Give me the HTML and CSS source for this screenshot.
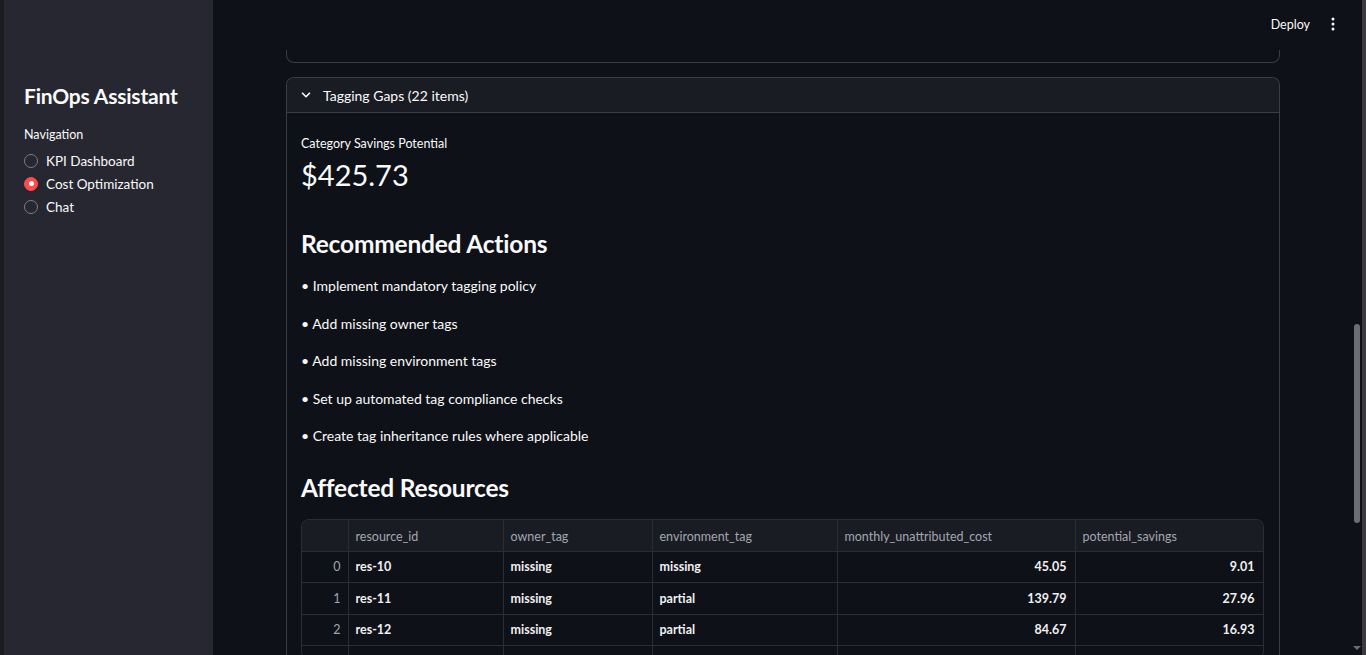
FILE: index.html
```html
<!DOCTYPE html>
<html lang="en">
<head>
<meta charset="utf-8">
<title>FinOps Assistant</title>
<link rel="stylesheet" href="styles.css">
</head>
<body>
<div class="app">
  <div class="edge-left"></div>
  <aside class="sidebar">
    <h1 class="brand">FinOps Assistant</h1>
    <div class="nav-label">Navigation</div>
    <ul class="radio-list">
      <li class="radio-item"><span class="radio"></span>KPI Dashboard</li>
      <li class="radio-item"><span class="radio radio-on"></span>Cost Optimization</li>
      <li class="radio-item"><span class="radio"></span>Chat</li>
    </ul>
  </aside>
  <main class="main">
    <header class="topbar">
      <span class="deploy">Deploy</span>
      <svg class="kebab" width="16" height="16" viewBox="0 0 16 16"><circle cx="8" cy="3" r="1.5" fill="#fafafa"/><circle cx="8" cy="8" r="1.5" fill="#fafafa"/><circle cx="8" cy="13" r="1.5" fill="#fafafa"/></svg>
    </header>
    <div class="content">
      <div class="prev-expander"></div>
      <section class="expander">
        <div class="exp-head">
          <svg class="chev" width="12" height="12" viewBox="0 0 12 12"><path d="M2.5 4.2 L6 7.7 L9.5 4.2" fill="none" stroke="#fafafa" stroke-width="1.6" stroke-linecap="round" stroke-linejoin="round"/></svg>
          <span>Tagging Gaps (22 items)</span>
        </div>
        <div class="exp-body">
          <div class="metric-label">Category Savings Potential</div>
          <div class="metric-value">$425.73</div>
          <h3 class="h3 h3-first">Recommended Actions</h3>
          <p class="bullet">• Implement mandatory tagging policy</p>
          <p class="bullet">• Add missing owner tags</p>
          <p class="bullet">• Add missing environment tags</p>
          <p class="bullet">• Set up automated tag compliance checks</p>
          <p class="bullet">• Create tag inheritance rules where applicable</p>
          <h3 class="h3 h3-second">Affected Resources</h3>
          <div class="table-wrap">
            <table class="grid">
              <colgroup>
                <col class="c-idx"><col class="c-id"><col class="c-owner"><col class="c-env"><col class="c-cost"><col class="c-save">
              </colgroup>
              <thead>
                <tr><th></th><th>resource_id</th><th>owner_tag</th><th>environment_tag</th><th>monthly_unattributed_cost</th><th>potential_savings</th></tr>
              </thead>
              <tbody>
                <tr><td class="idx">0</td><td>res-10</td><td>missing</td><td>missing</td><td class="num">45.05</td><td class="num">9.01</td></tr>
                <tr><td class="idx">1</td><td>res-11</td><td>missing</td><td>partial</td><td class="num">139.79</td><td class="num">27.96</td></tr>
                <tr><td class="idx">2</td><td>res-12</td><td>missing</td><td>partial</td><td class="num">84.67</td><td class="num">16.93</td></tr>
                <tr><td class="idx"></td><td></td><td></td><td></td><td class="num"></td><td class="num"></td></tr>
              </tbody>
            </table>
          </div>
        </div>
      </section>
    </div>
    <div class="scrollbar"><div class="thumb"></div><div class="arrow"></div></div>
  </main>
  <div class="edge-right"></div>
</div>
</body>
</html>
```
FILE: styles.css
```css
* { box-sizing: border-box; }
html, body { margin: 0; padding: 0; height: 100%; overflow: hidden; }
body {
  background: #0e1117;
  color: #fafafa;
  font-family: Lato, "Noto Sans", sans-serif;
}
.app { display: flex; height: 655px; }
.edge-left { width: 4px; background: #1b1c21; flex: none; }
.edge-right { width: 4px; background: #3b3b3d; flex: none; }
.sidebar {
  width: 209px;
  flex: none;
  background: #262730;
  padding: 83px 20px 0 20px;
}
.brand { margin: 0; font-size: 21px; font-weight: 700; line-height: 26px; letter-spacing: -0.2px; }
.nav-label { margin-top: 18px; font-size: 12.5px; line-height: 16px; }
.radio-list { list-style: none; margin: 6px 0 0 0; padding: 0; }
.radio-item { display: flex; align-items: center; font-size: 13.5px; height: 23px; }
.radio {
  width: 14px; height: 14px; border-radius: 50%;
  border: 1px solid #7a7c85; margin-right: 8px; flex: none;
}
.radio-on { background: #ff4b4b; border-color: #ff4b4b; position: relative; }
.radio-on::after {
  content: ""; position: absolute; left: 3.5px; top: 3.5px; width: 5px; height: 5px; border-radius: 50%; background: #fff;
}
.main { flex: 1; position: relative; overflow: hidden; }
.topbar {
  position: absolute; left: 0; right: 0; top: 0; height: 50px;
  background: #0e1117; z-index: 2;
  display: flex; justify-content: flex-end; align-items: center;
  padding-right: 21px; padding-top: 0;
}
.deploy { font-size: 12.5px; margin-right: 15px; margin-top: -2px; }
.kebab { margin-top: -2px; }
.content { width: 994px; margin-left: 73px; }
.prev-expander {
  height: 63px; border: 1px solid #3b3d45; border-top: none;
  border-radius: 0 0 8px 8px;
}
.expander {
  margin-top: 14px; border: 1px solid #3b3d45; border-radius: 8px 8px 0 0; border-bottom: none;
  height: 600px;
}
.exp-head {
  height: 35px; background: #1a1c24; border-bottom: 1px solid #3b3d45;
  border-radius: 8px 8px 0 0;
  display: flex; align-items: center; padding-left: 13px; font-size: 14px;
}
.chev { margin-right: 11px; }
.exp-body { padding: 23px 14px 0 14px; }
.metric-label { font-size: 12.5px; line-height: 16px; }
.metric-value { font-size: 29px; line-height: 44px; margin-top: 1px; }
.h3 { margin: 0; font-size: 24.5px; font-weight: 700; line-height: 34px; letter-spacing: -0.2px; }
.h3-first { margin-top: 30px; }
.h3-second { margin-top: 24px; }
.bullet { margin: 0; font-size: 14px; line-height: 22px; }
.h3-first + .bullet { margin-top: 14px; }
.bullet + .bullet { margin-top: 15.5px; }
.table-wrap {
  margin-top: 14px; width: 963px; border: 1px solid #2b2d35; border-radius: 8px;
  overflow: hidden; height: 140px; border-bottom: none;
}
.grid { border-collapse: collapse; table-layout: fixed; width: 961px; font-size: 12.5px; }
.c-idx { width: 46px; } .c-id { width: 155px; } .c-owner { width: 149px; } .c-env { width: 185px; }
.c-cost { width: 238px; } .c-save { width: 188px; }
.grid th {
  background: #1a1c24; color: #a3a6b0; font-weight: 400; text-align: left;
  height: 31px; padding: 2px 7px 0 7px; border-right: 1px solid #2b2d35; border-bottom: 1px solid #2b2d35;
}
.grid td {
  height: 31.5px; padding: 0 7px; border-right: 1px solid #2b2d35; border-bottom: 1px solid #2b2d35;
  font-weight: 700; color: #f0f0f2;
}
.grid td.idx { text-align: right; color: #a3a6b0; font-weight: 400; }
.grid td.num { text-align: right; padding-right: 8px; }
.scrollbar {
  position: absolute; right: 0; top: 0; bottom: 0; width: 13px; z-index: 3;
}
.thumb {
  position: absolute; left: 5px; top: 324px; width: 6px; height: 199px; border-radius: 3px; background: #6b6d72;
}
.arrow {
  position: absolute; left: 4px; bottom: 5px; width: 0; height: 0;
  border-left: 4px solid transparent; border-right: 4px solid transparent; border-top: 4px solid #6b6d72;
}
```
